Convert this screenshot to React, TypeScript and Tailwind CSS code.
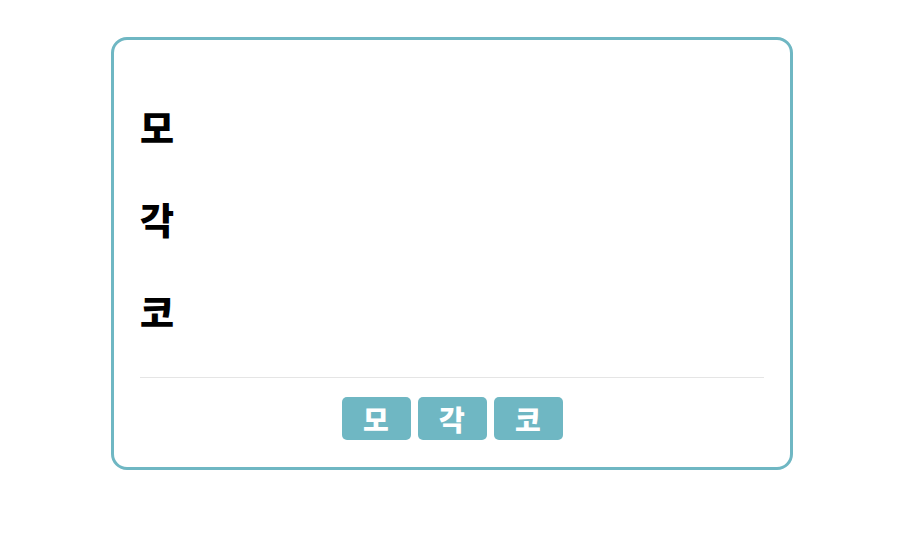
export default function App() {
  const items = ["모", "각", "코"]
  return (
    <div className="w-[904px] h-[546px] bg-white flex justify-center pt-[37px]" style={{ fontFamily: '"Noto Sans CJK KR", sans-serif' }}>
      <div className="w-[682px] h-[433px] border-[3px] border-[#6fb7c3] rounded-[16px] px-[26px] pt-[42px] pb-[26px] flex flex-col">
        {/* rows */}
        {items.map((t) => (
          <div key={t} className="h-[92px] flex items-center text-[37px] font-black text-black">
            {t}
          </div>
        ))}
        <div className="mt-[19px] h-px bg-[#e5e5e5]" />
        <div className="mt-[19px] flex justify-center gap-[7px]">
          {items.map((t) => (
            <button key={t} className="w-[69px] h-[43px] rounded-[5px] bg-[#6fb7c3] text-white text-[28px] font-black leading-none flex items-center justify-center">
              {t}
            </button>
          ))}
        </div>
      </div>
    </div>
  )
}
